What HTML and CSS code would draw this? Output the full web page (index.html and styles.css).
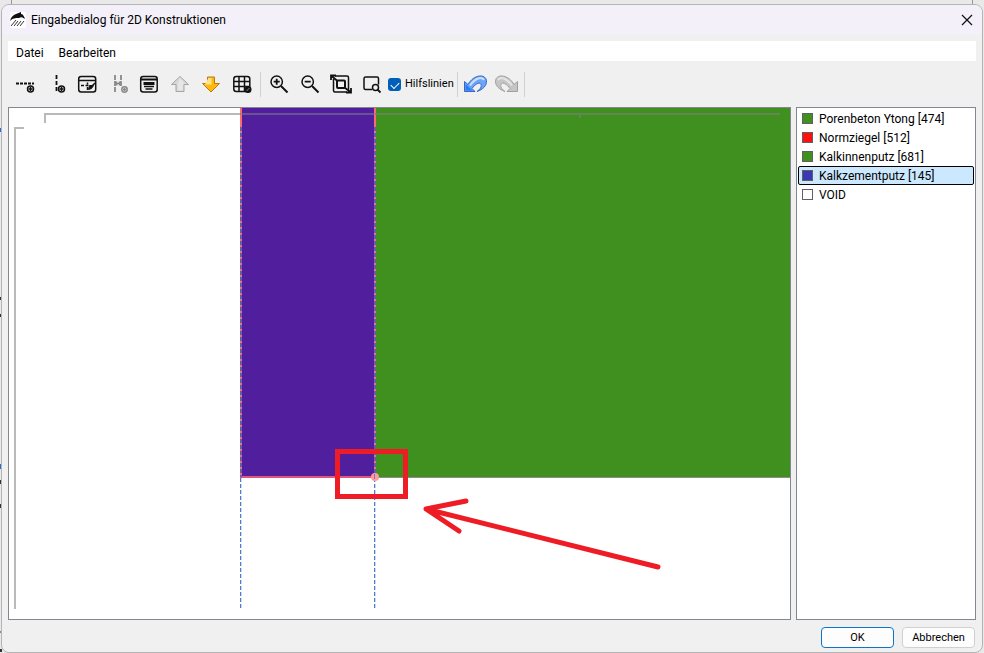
FILE: index.html
```html
<!DOCTYPE html>
<html lang="de">
<head>
    <meta charset="UTF-8">
    <meta name="viewport" content="width=device-width, initial-scale=1.0">
    <title>Eingabedialog für 2D Konstruktionen</title>
    <link rel="stylesheet" href="styles.css">
</head>
<body>
    <div class="dialog">
        <header class="titlebar">
            <svg class="logo" width="16" height="16" viewBox="0 0 16 16" aria-hidden="true">
                <rect width="16" height="16" fill="#fff"/>
                <path d="M0 9C1 5 3 3 6 2l5-2v2c2 0 3 2 4 5-3-2-4-2-6-1-4 0-6 0-9 3z" fill="#111"/>
                <path d="M1 14l5-6M4 14l4-5M7 14l4-5M10 14l4-5" stroke="#333" stroke-width="1"/>
            </svg>
            <h1>Eingabedialog für 2D Konstruktionen</h1>
            <button class="close" type="button" aria-label="Schließen">
                <svg width="12" height="12" viewBox="0 0 12 12"><path d="M1 1l10 10M11 1L1 11" stroke="#111" stroke-width="1.2"/></svg>
            </button>
        </header>

        <nav class="menubar">
            <button type="button">Datei</button>
            <button type="button">Bearbeiten</button>
        </nav>

        <div class="toolbar">
            <div class="group">
                <button type="button" aria-label="Horizontale Hilfslinie">
                    <svg viewBox="0 0 23 23"><path d="M2 10.500h18" stroke-width="1.800" stroke-dasharray="3 1"/><circle cx="16.500" cy="16" r="3"/><path d="M14.500 16h4M16.500 14v4"/></svg>
                </button>
                <button type="button" aria-label="Vertikale Hilfslinie">
                    <svg viewBox="0 0 23 23"><path d="M11.500 2v17" stroke-width="1.800" stroke-dasharray="4 2"/><circle cx="16.500" cy="16" r="3"/><path d="M14.500 16h4M16.500 14v4"/></svg>
                </button>
                <button type="button" aria-label="Hilfslinien bearbeiten">
                    <svg viewBox="0 0 23 23"><rect x="2.700" y="3.500" width="17" height="15.500" rx="2.500"/><path d="M3 7.500h17M5 12.500h3M9.500 12.500h3M11.500 9.500v2M11.500 14v3"/><path d="M12.500 16.500l1-4h4l-2 3z" fill="#111" stroke-width="1"/><path d="M16 13l3-3"/></svg>
                </button>
                <button type="button" aria-label="Abstand" disabled>
                    <svg class="dim" viewBox="0 0 23 23"><path d="M8 2v17M14 2v11" stroke-width="1.800" stroke-dasharray="5 1"/><path d="M8 10.500h6M9.500 8.500v4M12.500 8.500v4"/><circle cx="17.500" cy="16.500" r="2.700"/><path d="M16 16.500h3M17.500 15v3"/></svg>
                </button>
                <button type="button" aria-label="Eigenschaften">
                    <svg viewBox="0 0 23 23"><rect x="2.700" y="3.500" width="16.500" height="15.500" rx="2.500"/><path d="M3 6.500h16" stroke-width="1.800"/><path d="M5.500 10.500h11" stroke-width="3"/><path d="M6 13.500h10M7.500 16h7"/></svg>
                </button>
                <button type="button" aria-label="Nach oben" disabled>
                    <svg viewBox="0 0 23 23"><path d="M11 3.500l8.500 8H15v7H7v-7H2.500z" fill="#d7d7d7" stroke="#a5a5a5" stroke-width="1"/><path d="M11 5l5 5.500h-2v7H9v-7" fill="#e6e6e6" stroke="none"/></svg>
                </button>
                <button type="button" aria-label="Nach unten">
                    <svg viewBox="0 0 23 23"><path d="M7.500 4h7v6.500h5L11 19 2.500 10.500h5z" fill="#ffb80c" stroke="#b9791b" stroke-width="1"/><path d="M8.500 5h3v6.500H5z" fill="#ffe486" stroke="none"/></svg>
                </button>
                <button type="button" aria-label="Raster">
                    <svg viewBox="0 0 23 23"><rect x="2.800" y="3.500" width="16" height="15" rx="2.500"/><path d="M8 3.500v15M13.500 3.500v15M3 8.500h16M3 13.500h16"/><circle cx="17" cy="16.500" r="3.500" fill="#111" stroke="none"/><path d="M15.500 18l3-3" stroke="#888" stroke-width="1"/></svg>
                </button>
            </div>
            <div class="group">
                <button type="button" aria-label="Vergrößern">
                    <svg viewBox="0 0 23 23"><circle cx="9.700" cy="8.700" r="5.700"/><path d="M14 13l6.500 6.500" stroke-width="2"/><path d="M6.700 8.700h6M9.700 5.700v6" stroke-width="1.800"/></svg>
                </button>
                <button type="button" aria-label="Verkleinern">
                    <svg viewBox="0 0 23 23"><circle cx="9.700" cy="8.700" r="5.700"/><path d="M14 13l6.500 6.500" stroke-width="2"/><path d="M6.700 8.700h6" stroke-width="1.800"/></svg>
                </button>
                <button type="button" aria-label="Alles zeigen">
                    <svg viewBox="0 0 23 23"><path d="M6 3h12a1.500 1.500 0 0 1 1.500 1.500V17M4.500 6v11.500A1.500 1.500 0 0 0 6 19h12"/><rect x="8" y="7.500" width="8" height="7.500" rx="1" stroke-width="2"/><path d="M2 7V2.500H7M2.500 3l6 5M22 15v4.500H17M21.500 19l-6-4.500" stroke-width="1.800"/></svg>
                </button>
                <button type="button" aria-label="Ausschnitt">
                    <svg viewBox="0 0 23 23"><path d="M12 16.500H5.500a1.500 1.500 0 0 1-1.500-1.500V5.500A1.500 1.500 0 0 1 5.500 4h11.500a1.500 1.500 0 0 1 1.500 1.500v6"/><circle cx="15.500" cy="14.500" r="3"/><path d="M17.500 16.500l3 3" stroke-width="1.800"/></svg>
                </button>
                <label class="guides" for="guides"><input type="checkbox" id="guides" checked>Hilfslinien</label>
            </div>
            <div class="group">
                <button type="button" aria-label="Rückgängig">
                    <svg class="wide" viewBox="0 0 25 23"><path d="M1.500 8.500v10H12L9 15.500c4-5.500 8-6.500 9-4 1 2-1 5-4 7 6-2 10-6 9.500-11C22 0 10 2 5 11.500z" fill="#6ba5fb" stroke="#3a66c0" stroke-width="1"/><path d="M7 12.500C12 5 19 3 21 7" stroke="#cce2ff" stroke-width="2"/><path d="M2.500 11v6.500h7z" fill="#2d7af5" stroke="none"/></svg>
                </button>
                <button type="button" aria-label="Wiederholen" disabled>
                    <svg class="wide" viewBox="0 0 25 23"><path d="M23.500 8.500v10H13l3-3c-4-5.500-8-6.500-9-4-1 2 1 5 4 7-6-2-10-6-9.500-11C3 0 15 2 20 11.500z" fill="#c5c5c5" stroke="#a0a0a0" stroke-width="1"/><path d="M18 12.500C13 5 6 3 4 7" stroke="#e4e4e4" stroke-width="2"/></svg>
                </button>
            </div>
        </div>

        <main class="content">
            <div class="canvas">
                <svg viewBox="0 0 781 511" preserveAspectRatio="xMinYMin meet" role="img" aria-label="Konstruktion">
                    <!-- Materialflächen -->
                    <rect x="232" y="0" width="134" height="369" fill="#511f9d"/>
                    <rect x="366" y="0" width="415" height="369" fill="#40901f"/>
                    <path d="M366 369.500h415" stroke="#8c8c8c"/>

                    <!-- Kanten und Hilfslinien -->
                    <path d="M232 0v369M366 0v369" stroke="#ff6b6b" stroke-width="2"/>
                    <path d="M231 369h135" stroke="#e0567f" stroke-width="2"/>
                    <path d="M232 19v350M366 19v350" stroke="#5b62b5" stroke-width="2" stroke-dasharray="4 2"/>
                    <path d="M231.500 370v131M365.500 370v131" stroke="#4a80d2" stroke-dasharray="4 2"/>
                    <path d="M232.500 370v131M366.500 370v131" stroke="#cfd6e8" stroke-dasharray="4 2"/>

                    <!-- Lineale -->
                    <path d="M36 15V6h735M571 6v4M15 20H6v481" fill="none" stroke="#808080" stroke-opacity=".55" stroke-width="2"/>

                    <!-- Markierung -->
                    <circle cx="366" cy="369" r="4" fill="#ff9c9c"/>
                    <path d="M365.500 366v5" stroke="#8b6cae"/>
                    <rect x="328.500" y="343.500" width="68" height="45" fill="none" stroke="#ee1c24" stroke-width="5"/>
                    <path d="M457 393l-40 8 33 22M417 401l232 58" fill="none" stroke="#ee1c24" stroke-width="5" stroke-linecap="round" stroke-linejoin="round"/>
                </svg>
            </div>

            <ul class="materials">
                <li><span class="swatch green"></span>Porenbeton Ytong [474]</li>
                <li><span class="swatch red"></span>Normziegel [512]</li>
                <li><span class="swatch green"></span>Kalkinnenputz [681]</li>
                <li class="selected"><span class="swatch blue"></span>Kalkzementputz [145]</li>
                <li><span class="swatch"></span>VOID</li>
            </ul>
        </main>

        <footer class="actions">
            <button class="primary" type="button">OK</button>
            <button type="button">Abbrechen</button>
        </footer>
    </div>
</body>
</html>
```
FILE: styles.css
```css
* {
    box-sizing: border-box;
}

/* Am Rand ist noch das Hauptfenster zu sehen */
body {
    margin: 0;
    height: 100vh;
    padding: 4px 1px 0;
    background:
        linear-gradient(#2a6fc9, #2a6fc9) 0 128px / 2px 4px no-repeat,
        linear-gradient(#333, #333) 0 297px / 2px 3px no-repeat,
        linear-gradient(#333, #333) 0 314px / 2px 3px no-repeat,
        linear-gradient(#2a6fc9, #2a6fc9) 0 464px / 2px 5px no-repeat,
        linear-gradient(#333, #333) 0 480px / 2px 4px no-repeat,
        linear-gradient(#333, #333) 0 504px / 2px 4px no-repeat,
        linear-gradient(#5a8fc0, #5a8fc0) 0 631px / 2px 2px no-repeat,
        linear-gradient(#333, #333) 0 649px / 2px 3px no-repeat,
        linear-gradient(#999, #999) 11px 0 / 1px 5px no-repeat,
        linear-gradient(#999, #999) right 11px top 0 / 1px 5px no-repeat,
        #e9e9e9;
    font-family: Roboto, "Noto Sans", sans-serif;
    font-size: 12px;
    line-height: 20px;
    color: #000;
    overflow: hidden;
}

button {
    font: inherit;
    color: inherit;
    border: none;
    background: none;
    padding: 0;
}

.dialog {
    display: flex;
    flex-direction: column;
    height: 100%;
    border: 1px solid #b4b4b4;
    border-radius: 8px;
    background: #f0f0f0;
    overflow: hidden;
}

/* Titelleiste */
.titlebar {
    display: flex;
    align-items: center;
    gap: 5px;
    height: 30px;
    padding: 0 9px 0 8px;
    background: #f3f0f9;
}

.titlebar h1 {
    flex: 1;
    margin: 0;
    font-size: 12px;
    font-weight: normal;
}

.close {
    display: flex;
}

/* Menü */
.menubar {
    display: flex;
    gap: 15px;
    margin: 6px 6px 0;
    padding: 2px 8px 0;
    height: 20px;
    background: #fff;
}

/* Werkzeugleiste */
.toolbar {
    display: flex;
    align-items: center;
    height: 46px;
    padding-left: 8px;
}

.group {
    display: flex;
    align-items: center;
    height: 25px;
    padding-right: 2px;
    margin-right: 2px;
    border-right: 1px solid #d0d0d0;
}

.toolbar button {
    display: flex;
    justify-content: center;
    width: 31px;
}

.toolbar svg {
    width: 23px;
    height: 23px;
    fill: none;
    stroke: #111;
    stroke-width: 1.5px;
}

.toolbar svg.wide {
    width: 25px;
}

.toolbar svg.dim {
    stroke: #888;
}

.guides {
    display: flex;
    align-items: center;
    gap: 4px;
    padding: 0 1px;
    font-size: 11px;
}

.guides input {
    appearance: none;
    position: relative;
    width: 13px;
    height: 13px;
    margin: 0;
    border-radius: 3px;
    background: #005fb8;
}

.guides input:checked::after {
    content: "";
    position: absolute;
    left: 3px;
    top: 4px;
    width: 7px;
    height: 4px;
    border: solid #fff;
    border-width: 0 0 1px 1px;
    transform: rotate(-45deg);
}

/* Zeichenfläche und Materialliste */
.content {
    flex: 1;
    display: flex;
    gap: 5px;
    min-height: 0;
    padding: 0 6px;
}

.canvas {
    flex: 1;
    min-width: 0;
    border: 1px solid #828790;
    background: #fff;
}

.canvas svg {
    display: block;
    width: 100%;
    height: 100%;
}

.materials {
    width: 180px;
    margin: 0;
    padding: 1px;
    border: 1px solid #828790;
    background: #fff;
    list-style: none;
}

.materials li {
    display: flex;
    align-items: center;
    gap: 6px;
    height: 19px;
    padding: 0 3px;
    border: 1px solid transparent;
}

.materials .selected {
    border-color: #000;
    border-radius: 2px;
    background: #cce8ff;
}

.swatch {
    width: 11px;
    height: 11px;
    border: 1px solid #606060;
    background: #fff;
}

.green {
    background: #40901f;
}

.red {
    background: #ff1010;
}

.blue {
    background: #3838b0;
}

/* Schaltflächen */
.actions {
    display: flex;
    justify-content: flex-end;
    gap: 8px;
    height: 32px;
    padding: 7px 7px 0;
}

.actions button {
    width: 73px;
    height: 21px;
    border: 1px solid #d0d0d0;
    border-radius: 4px;
    background: #fdfdfd;
    font-size: 11px;
}

.actions .primary {
    border-color: #0f74c8;
}
```
